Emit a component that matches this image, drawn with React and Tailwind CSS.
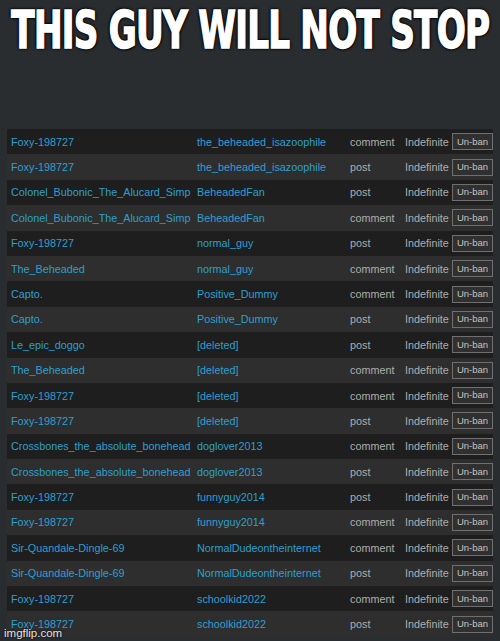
import React from "react";

const rows = [
  ["Foxy-198727", "the_beheaded_isazoophile", "comment"],
  ["Foxy-198727", "the_beheaded_isazoophile", "post"],
  ["Colonel_Bubonic_The_Alucard_Simp", "BeheadedFan", "post"],
  ["Colonel_Bubonic_The_Alucard_Simp", "BeheadedFan", "comment"],
  ["Foxy-198727", "normal_guy", "post"],
  ["The_Beheaded", "normal_guy", "comment"],
  ["Capto.", "Positive_Dummy", "comment"],
  ["Capto.", "Positive_Dummy", "post"],
  ["Le_epic_doggo", "[deleted]", "post"],
  ["The_Beheaded", "[deleted]", "comment"],
  ["Foxy-198727", "[deleted]", "comment"],
  ["Foxy-198727", "[deleted]", "post"],
  ["Crossbones_the_absolute_bonehead", "doglover2013", "comment"],
  ["Crossbones_the_absolute_bonehead", "doglover2013", "post"],
  ["Foxy-198727", "funnyguy2014", "post"],
  ["Foxy-198727", "funnyguy2014", "comment"],
  ["Sir-Quandale-Dingle-69", "NormalDudeontheinternet", "comment"],
  ["Sir-Quandale-Dingle-69", "NormalDudeontheinternet", "post"],
  ["Foxy-198727", "schoolkid2022", "comment"],
  ["Foxy-198727", "schoolkid2022", "post"],
];

export default function App() {
  return (
    <div
      className="relative w-[500px] h-[641px] overflow-hidden bg-[#2a2d30]"
      style={{ fontFamily: '"Liberation Sans", Arial, sans-serif' }}
    >
      <div className="h-[129px] flex justify-center pt-[2px]">
        <div
          className="text-white font-bold text-[52px] leading-[56px] tracking-[-1px] scale-x-[0.73] origin-center whitespace-nowrap"
          style={{
            fontFamily: '"DejaVu Sans Condensed", "DejaVu Sans", sans-serif',
            WebkitTextStroke: "1.5px #fff",
            textShadow:
              "0 0 3px #000, 0 0 3px #000, 0 0 4px #000, 1px 1px 2px #000, -1px -1px 2px #000",
          }}
        >
          THIS GUY WILL NOT STOP
        </div>
      </div>
      <div className="mx-[7px] flex flex-col">
        {rows.map((r, i) => (
          <div
            key={i}
            className={`flex items-center h-[25.4px] text-[10.8px] ${
              i % 2 === 0 ? "bg-[#1e1e1e]" : "bg-[#2e2e2e]"
            }`}
          >
            <div className="w-[190px] pl-[4px] text-[#2d9fcf] whitespace-nowrap">{r[0]}</div>
            <div className="w-[153px] text-[#2d9fcf] whitespace-nowrap">{r[1]}</div>
            <div className="w-[55px] text-[#adadad] whitespace-nowrap">{r[2]}</div>
            <div className="w-[47px] text-[#adadad] whitespace-nowrap">Indefinite</div>
            <div className="w-[41px] h-[17px] border border-[#6f6f6f] bg-[#303030] text-[#c4c4c4] text-[9.5px] flex items-center justify-center">
              Un-ban
            </div>
          </div>
        ))}
      </div>
      <div
        className="absolute left-[4px] top-[626px] text-[11.5px] leading-[14px] text-[#e6e6e6]"
        style={{ textShadow: "0 0 2px #000" }}
      >
        imgflip.com
      </div>
    </div>
  );
}
